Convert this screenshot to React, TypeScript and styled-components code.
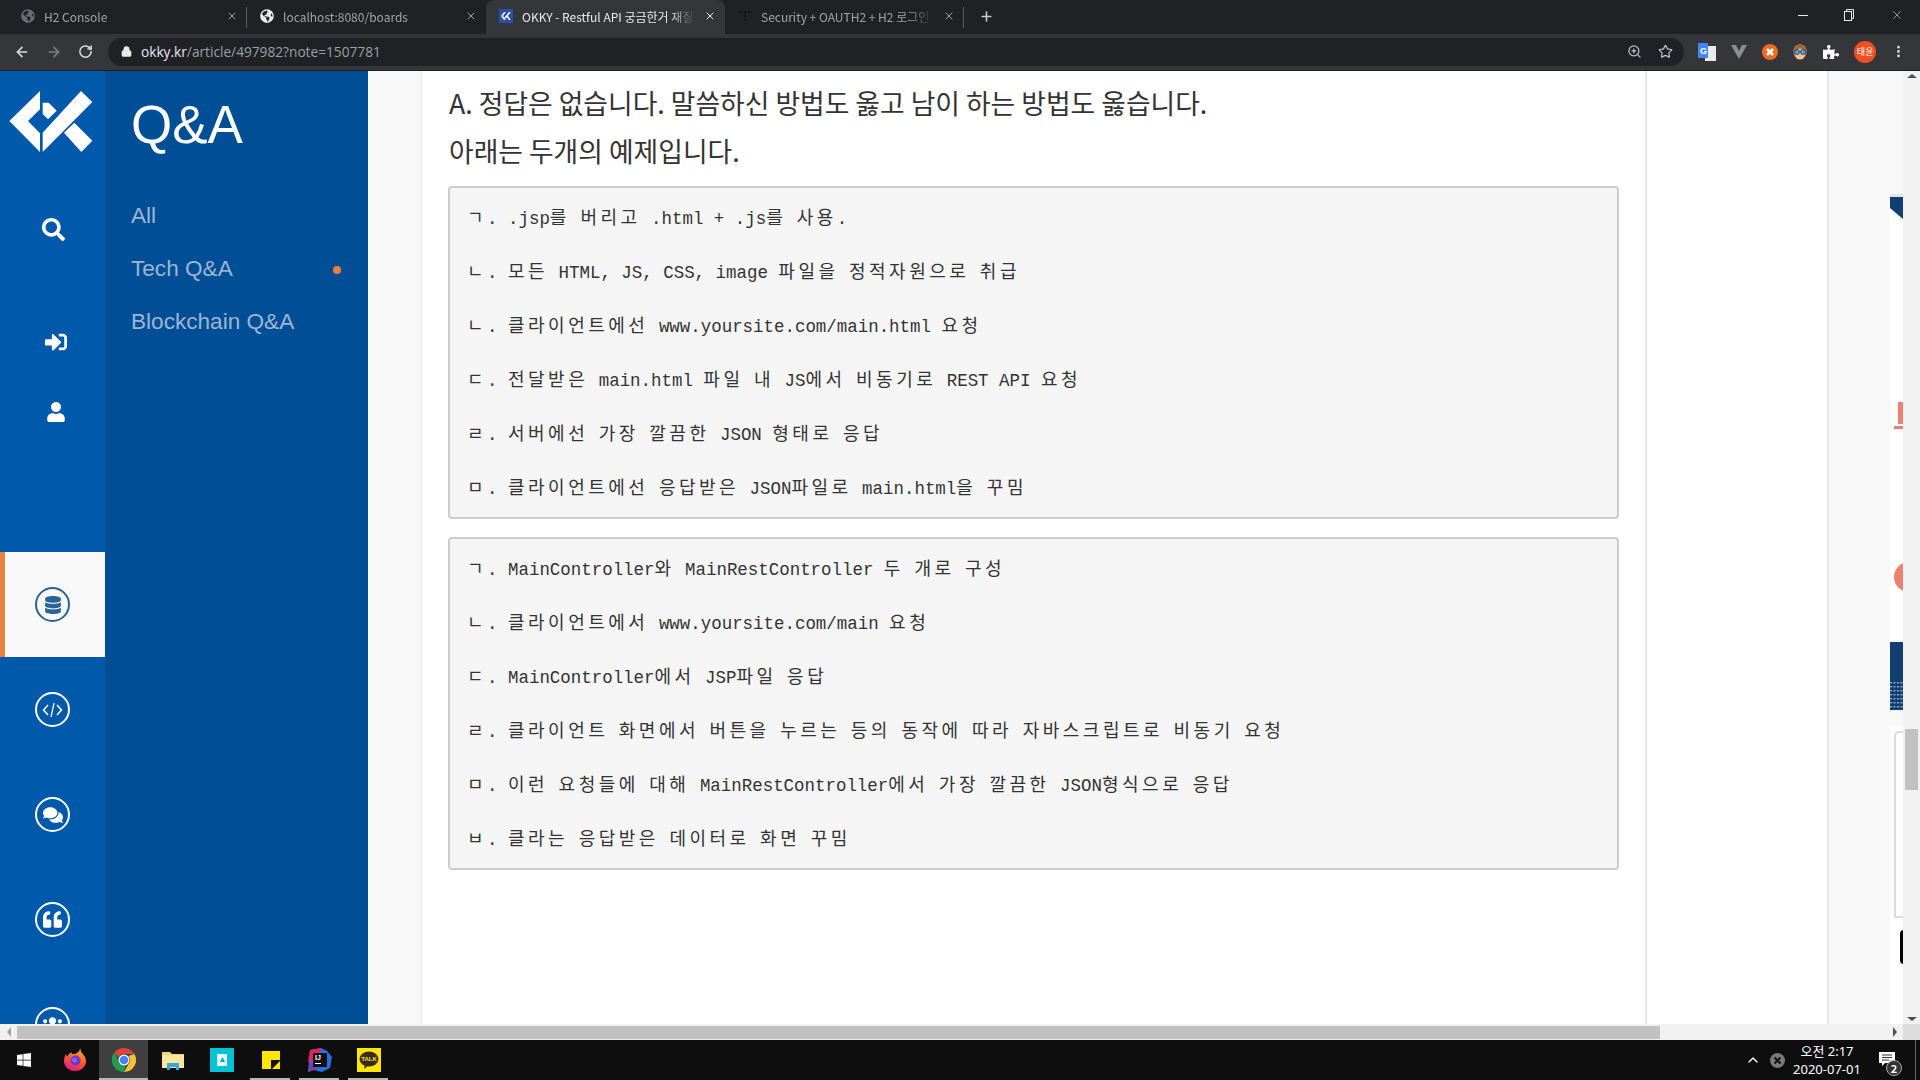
import { ReactNode } from "react";
import styled, { createGlobalStyle } from "styled-components";
import {
  FaComments,
  FaDatabase,
  FaGlobeAmericas,
  FaPuzzlePiece,
  FaQuoteLeft,
  FaSearch,
  FaSignInAlt,
  FaUser,
  FaUsers,
  FaWindows,
} from "react-icons/fa";
import {
  ArrowLeft,
  ArrowRight,
  ChevronUp,
  Lock,
  MoreVertical,
  Plus,
  RotateCw,
  Star,
  X,
  ZoomIn,
} from "lucide-react";

const GlobalStyle = createGlobalStyle`
  html, body {
    margin: 0;
    padding: 0;
    background: #fff;
    overflow: hidden;
  }
  * {
    box-sizing: border-box;
  }
`;

const Screen = styled.div`
  width: 1920px;
  height: 1080px;
  display: flex;
  flex-direction: column;
  overflow: hidden;
  font-family: "Noto Sans CJK KR", "Noto Sans", sans-serif;
`;

/* browser chrome */
const TabStrip = styled.div`
  height: 34px;
  flex: none;
  display: flex;
  align-items: stretch;
  padding-left: 8px;
  background: #202124;
`;

const Tab = styled.div<{ $active?: boolean; $sep?: boolean }>`
  width: 239px;
  flex: none;
  display: flex;
  align-items: center;
  gap: 9px;
  padding: 0 9px 2px 13px;
  position: relative;
  border-radius: 8px 8px 0 0;
  color: ${(p) => (p.$active ? "#e8eaed" : "#a0a3a7")};
  background: ${(p) => (p.$active ? "#35363a" : "transparent")};
  &::after {
    content: "";
    display: ${(p) => (p.$sep ? "block" : "none")};
    position: absolute;
    right: 0;
    top: 7px;
    bottom: 6px;
    width: 1px;
    background: #5a5c60;
  }
`;

const TabTitle = styled.div`
  flex: 1;
  min-width: 0;
  font-size: 12px;
  white-space: nowrap;
  overflow: hidden;
  -webkit-mask-image: linear-gradient(to right, #000 85%, transparent);
  mask-image: linear-gradient(to right, #000 85%, transparent);
`;

const TabFavicon = styled.div<{ $bg?: string }>`
  width: 14px;
  height: 14px;
  flex: none;
  display: flex;
  align-items: center;
  justify-content: center;
  background: ${(p) => p.$bg || "transparent"};
`;

const NewTab = styled.div`
  width: 44px;
  flex: none;
  display: flex;
  align-items: center;
  justify-content: center;
  padding-bottom: 1px;
  color: #c8cacd;
`;

const WindowControls = styled.div`
  margin-left: auto;
  display: flex;
  align-items: center;
  gap: 36px;
  padding: 0 16px 4px 0;
  color: #e8eaed;
`;

const Toolbar = styled.div`
  height: 37px;
  flex: none;
  display: flex;
  align-items: center;
  padding: 0 0 1px 14px;
  background: #35363a;
  color: #dadce0;
  border-bottom: 1px solid #1e1f22;
`;

const NavButtons = styled.div`
  display: flex;
  align-items: center;
  gap: 16px;
  width: 94px;
  flex: none;
`;

const Omnibox = styled.div`
  width: 1576px;
  height: 28px;
  flex: none;
  display: flex;
  align-items: center;
  padding: 0 11px 0 13px;
  border-radius: 14px;
  background: #202124;
`;

const UrlText = styled.div`
  flex: 1;
  margin-left: 9px;
  font-family: "Open Sans", sans-serif;
  font-size: 13.7px;
  color: #9aa0a6;
  span {
    color: #e8eaed;
  }
`;

const OmniIcons = styled.div`
  display: flex;
  align-items: center;
  gap: 16px;
  color: #bdc1c6;
`;

const Extensions = styled.div`
  display: flex;
  flex: 1;
  align-items: center;
  justify-content: space-between;
  padding: 0 14px 0 14px;
`;

const Avatar = styled.div`
  width: 22px;
  height: 22px;
  border-radius: 50%;
  display: flex;
  align-items: center;
  justify-content: center;
  font-size: 9px;
  color: #fff;
  background: #ee5021;
`;

/* page */
const Viewport = styled.div`
  flex: 1;
  min-height: 0;
  display: flex;
`;

const Page = styled.div`
  flex: 1;
  min-width: 0;
  display: flex;
  overflow: hidden;
  background: #f8f8f8;
`;

const Rail = styled.div`
  width: 105px;
  flex: none;
  display: flex;
  flex-direction: column;
  overflow: hidden;
  background: #0059ab;
  color: #fff;
`;

const LogoSlot = styled.div`
  height: 118px;
  flex: none;
  padding: 20px 0 0 9px;
`;

const RailIcon = styled.div<{ $h: number; $top?: number; $x?: number }>`
  height: ${(p) => p.$h}px;
  flex: none;
  margin-top: ${(p) => p.$top || 0}px;
  padding-left: ${(p) => p.$x || 0}px;
  display: flex;
  align-items: center;
  justify-content: center;
`;

const CategoryItem = styled.div<{ $active?: boolean }>`
  height: 105px;
  flex: none;
  display: flex;
  align-items: center;
  justify-content: center;
  background: ${(p) => (p.$active ? "#f8f8f8" : "transparent")};
  border-left: 5px solid ${(p) => (p.$active ? "#ea8040" : "transparent")};
  color: ${(p) => (p.$active ? "#2a6496" : "#fff")};
  padding-right: 5px;
`;

const CategoryCircle = styled.div`
  width: 35px;
  height: 35px;
  border-radius: 50%;
  border: 2px solid currentColor;
  display: flex;
  align-items: center;
  justify-content: center;
`;

const SubNav = styled.div`
  width: 263px;
  flex: none;
  padding: 24px 27px 0 26px;
  background: #004e96;
  font-family: "Liberation Sans", Arial, sans-serif;
`;

const SubNavTitle = styled.div`
  height: 60px;
  line-height: 60px;
  font-size: 53px;
  color: #fff;
  margin-bottom: 34px;
`;

const SubNavItem = styled.div`
  height: 53px;
  display: flex;
  align-items: center;
  justify-content: space-between;
  font-size: 22.6px;
  color: #9db5d4;
`;

const Dot = styled.span`
  width: 8px;
  height: 8px;
  border-radius: 50%;
  margin-top: 2px;
  background: #f47d3c;
`;

const Gutter = styled.div`
  width: 53px;
  flex: none;
`;

const Article = styled.div`
  width: 1226px;
  flex: none;
  padding: 8px 27px 0 26px;
  background: #fff;
  border-left: 1px solid #e6e6e6;
  border-right: 2px solid #e6e6e6;
`;

const Sentence = styled.p`
  margin: 0;
  height: 48px;
  line-height: 48px;
  padding-left: 1px;
  font-size: 26.8px;
  color: #333;
  white-space: nowrap;
`;

const Pre = styled.pre`
  margin: 0 0 18px;
  width: 1171px;
  padding: 1px 17px 4px;
  border: 2px solid #ccc;
  border-radius: 4px;
  background: #f5f5f5;
  &:first-of-type {
    margin-top: 11px;
  }
`;

const PreLine = styled.div`
  height: 54px;
  line-height: 54px;
  font-family: "Liberation Mono", monospace;
  font-size: 17.45px;
  color: #333;
  white-space: pre;
`;

const Han = styled.span`
  font-family: "Noto Sans CJK KR", sans-serif;
  font-size: 18px;
  letter-spacing: 3.5px;
`;

const WhiteSpace = styled.div`
  width: 182px;
  flex: none;
  background: #fff;
  border-right: 2px solid #e6e6e6;
`;

const AdColumn = styled.div`
  flex: 1;
  padding: 123px 0 0 61px;
  display: flex;
  flex-direction: column;
  overflow: hidden;
`;

const AdBanner = styled.svg`
  width: 13px;
  height: 448px;
  flex: none;
  display: block;
`;

const AdStrip = styled.svg`
  width: 13px;
  height: 68px;
  flex: none;
  display: block;
`;

const AdCard = styled.div`
  width: 13px;
  flex: 1;
  margin-top: 16px;
  background: #fff;
  padding: 5px 0 0 4px;
`;

const AdOutline = styled.div`
  height: 187px;
  border: 2px solid #dcdce0;
  border-right: none;
  border-radius: 5px 0 0 0;
  margin-bottom: 12px;
`;

const AdBlack = styled.div`
  width: 10px;
  height: 34px;
  margin-left: 6px;
  border-radius: 4px 0 0 4px;
  background: #000;
`;

const VScroll = styled.div`
  width: 17px;
  flex: none;
  display: flex;
  flex-direction: column;
  align-items: center;
  justify-content: space-between;
  padding: 3px 0 3px;
  background: #f1f1f1;
  position: relative;
`;

const VThumb = styled.div`
  position: absolute;
  top: 658px;
  left: 2px;
  width: 13px;
  height: 61px;
  background: #c1c1c1;
`;

const Arrow = styled.div<{ $dir: "up" | "down" | "left" | "right" }>`
  width: 0;
  height: 0;
  flex: none;
  border-style: solid;
  border-color: transparent;
  ${(p) =>
    p.$dir === "up"
      ? "border-width: 0 5px 4px; border-bottom-color: #505050;"
      : p.$dir === "down"
        ? "border-width: 4px 5px 0; border-top-color: #505050;"
        : p.$dir === "left"
          ? "border-width: 5px 4px 5px 0; border-right-color: #a3a3a3;"
          : "border-width: 5px 0 5px 4px; border-left-color: #505050;"}
`;

const HScroll = styled.div`
  height: 16px;
  flex: none;
  display: flex;
  align-items: center;
  background: #f1f1f1;
`;

const HButton = styled.div`
  width: 17px;
  height: 16px;
  flex: none;
  display: flex;
  align-items: center;
  justify-content: center;
`;

const HThumb = styled.div`
  width: 1643px;
  height: 13px;
  flex: none;
  background: #c1c1c1;
`;

const ScrollCorner = styled.div`
  width: 17px;
  height: 16px;
  flex: none;
  background: #dcdcdc;
`;

const HSpacer = styled.div`
  flex: 1;
`;

/* taskbar */
const Taskbar = styled.div`
  height: 40px;
  flex: none;
  display: flex;
  align-items: stretch;
  background: #0e0e0e;
  color: #fff;
`;

const TaskItem = styled.div<{ $on?: boolean; $open?: boolean }>`
  width: 49px;
  flex: none;
  display: flex;
  align-items: center;
  justify-content: center;
  position: relative;
  background: ${(p) => (p.$on ? "#3f3f3f" : "transparent")};
  &::after {
    content: "";
    display: ${(p) => (p.$open ? "block" : "none")};
    position: absolute;
    bottom: 0;
    left: ${(p) => (p.$on ? "0" : "4px")};
    right: ${(p) => (p.$on ? "0" : "5px")};
    height: 2px;
    background: #b8b8b8;
  }
`;

const StartButton = styled.div`
  width: 50px;
  flex: none;
  display: flex;
  align-items: center;
  justify-content: center;
  padding-right: 2px;
`;

const Tray = styled.div`
  margin-left: auto;
  display: flex;
  align-items: center;
  padding-right: 4px;
`;

const TrayIcon = styled.div`
  width: 24px;
  display: flex;
  align-items: center;
  justify-content: center;
`;

const Clock = styled.div`
  width: 76px;
  margin-right: 5px;
  text-align: center;
  font-size: 13px;
  line-height: 18px;
  color: #fff;
  font-family: "Noto Sans", "Noto Sans CJK KR", sans-serif;
`;

const Notify = styled.div`
  width: 46px;
  height: 100%;
  display: flex;
  align-items: center;
  justify-content: center;
  padding: 0 11px 2px 0;
  position: relative;
  border-right: 1px solid #666;
`;

const NotifyBadge = styled.span`
  position: absolute;
  left: 16px;
  top: 20px;
  width: 16px;
  height: 16px;
  border-radius: 50%;
  display: flex;
  align-items: center;
  justify-content: center;
  font-size: 11px;
  font-weight: 700;
  background: #333;
  border: 1px solid #aaa;
  color: #fff;
`;

const Mono = ({ text }: { text: string }) => (
  <>
    {text
      .split(/([\u3131-\uD7A3]+)/)
      .map((part, i): ReactNode => (i % 2 ? <Han key={i}>{part}</Han> : part))}
  </>
);

const boxOne = [
  "ㄱ. .jsp를 버리고 .html + .js를 사용.",
  "ㄴ. 모든 HTML, JS, CSS, image 파일을 정적자원으로 취급",
  "ㄴ. 클라이언트에선 www.yoursite.com/main.html 요청",
  "ㄷ. 전달받은 main.html 파일 내 JS에서 비동기로 REST API 요청",
  "ㄹ. 서버에선 가장 깔끔한 JSON 형태로 응답",
  "ㅁ. 클라이언트에선 응답받은 JSON파일로 main.html을 꾸밈",
];

const boxTwo = [
  "ㄱ. MainController와 MainRestController 두 개로 구성",
  "ㄴ. 클라이언트에서 www.yoursite.com/main 요청",
  "ㄷ. MainController에서 JSP파일 응답",
  "ㄹ. 클라이언트 화면에서 버튼을 누르는 등의 동작에 따라 자바스크립트로 비동기 요청",
  "ㅁ. 이런 요청들에 대해 MainRestController에서 가장 깔끔한 JSON형식으로 응답",
  "ㅂ. 클라는 응답받은 데이터로 화면 꾸밈",
];

const OkkyLogo = () => (
  <svg width="84" height="62" viewBox="30 65 250 186" fill="#fff">
    <polygon points="122,65 30,155 122,248 122,192 86,155 122,120" />
    <polygon points="130,248 130,190 245,65 279,98" />
    <polygon points="130,100 148,100 172,124 146,150 130,134" />
    <polygon points="194,190 225,160 279,214 246,248" />
  </svg>
);

const CodeGlyph = () => (
  <svg width="21" height="16" viewBox="0 0 21 16" fill="none" stroke="currentColor" strokeWidth="1.500">
    <path d="M6 3L1.500 8 6 13M15 3l4.500 5L15 13" />
    <path d="M12 1L9 15" strokeWidth="1.200" />
  </svg>
);

const Firefox = () => (
  <svg width="24" height="24" viewBox="0 0 24 24">
    <defs>
      <linearGradient id="ffx" x1="0.7" y1="0" x2="0.3" y2="1">
        <stop offset="0" stopColor="#ffb32c" />
        <stop offset="0.5" stopColor="#ff5a2b" />
        <stop offset="1" stopColor="#e31587" />
      </linearGradient>
    </defs>
    <path
      d="M17 0c1 2 .5 3.500 1.500 4.500C21 7 23 9.500 23 13c0 6-5 10-11 10S1 19 1 13c0-3 1-5.500 2-7 0 1 .5 2 1.500 2.500C5.500 6 7 4.500 9 4.500 8.500 5.500 9 6 10 6c3 0 7-2 7-6z"
      fill="url(#ffx)"
    />
    <circle cx="12.500" cy="12.500" r="5" fill="#6a3bc0" />
    <circle cx="11.500" cy="12" r="2.500" fill="#9059ff" />
  </svg>
);

const Chrome = ({ size = 24 }: { size?: number }) => (
  <svg width={size} height={size} viewBox="0 0 24 24">
    <path d="M12 0a12 12 0 0 1 10.400 6H12a6 6 0 0 0-5.600 3.800L2.500 4.500A12 12 0 0 1 12 0z" fill="#db4437" />
    <path d="M22.400 6A12 12 0 0 1 12 24l5.200-9A6 6 0 0 0 16.500 8z" fill="#fbc02d" />
    <path d="M12 24A12 12 0 0 1 2.500 4.500l4.300 9.500a6 6 0 0 0 6.500 3.900z" fill="#1f9d55" />
    <circle cx="12" cy="12" r="5.500" fill="#fff" />
    <circle cx="12" cy="12" r="4.300" fill="#4285f4" />
  </svg>
);

const Explorer = () => (
  <svg width="22" height="20" viewBox="0 0 22 20">
    <path d="M0 2h8l2 2h12v14H0z" fill="#f5d06e" />
    <rect x="0" y="5" width="22" height="13" fill="#fde69a" />
    <path d="M5 20v-7h12v7h-3v-3H8v3z" fill="#35a8e0" />
  </svg>
);

const NoteApp = () => (
  <svg width="24" height="24" viewBox="0 0 24 24">
    <rect width="24" height="24" fill="#00c4d6" />
    <rect x="7" y="6" width="10" height="12" fill="#e8fbfd" />
    <path d="M10 14l2.500-5 2.500 5z" fill="#00a6c0" />
  </svg>
);

const Sticky = () => (
  <svg width="18" height="18" viewBox="0 0 18 18">
    <rect width="18" height="18" fill="#ffe500" />
    <path d="M18 9v1l-8 8H9V9z" fill="#111" />
  </svg>
);

const Idea = () => (
  <svg width="24" height="24" viewBox="0 0 24 24">
    <path d="M2 2l11-2 6 3 5 6-2 11-8 4-8-2-6 2z" fill="#2b6ee0" />
    <path d="M0 14L2 2l11-2-3 12z" fill="#e0245e" />
    <path d="M0 24l2-10 8 6z" fill="#7b3fa0" />
    <rect x="5" y="5" width="14" height="14" fill="#111" />
    <text x="7" y="12" fontSize="7" fontWeight="700" fill="#fff" fontFamily="Liberation Sans">IJ</text>
    <rect x="7" y="15" width="6" height="1" fill="#fff" />
  </svg>
);

const KakaoTalk = () => (
  <svg width="24" height="24" viewBox="0 0 24 24">
    <rect width="24" height="24" fill="#ffe600" />
    <ellipse cx="12" cy="11" rx="9.500" ry="7.500" fill="#3a2a1a" />
    <path d="M8 16l-1 5 5-4z" fill="#3a2a1a" />
    <text x="12" y="13" textAnchor="middle" fontSize="6" fontWeight="700" fill="#ffe600" fontFamily="Liberation Sans">TALK</text>
  </svg>
);

const Translate = () => (
  <svg width="18" height="18" viewBox="0 0 18 18">
    <rect x="7" y="3" width="11" height="15" fill="#e8eaed" />
    <rect x="0" y="0" width="10" height="15" fill="#4285f4" />
    <text x="2" y="11" fontSize="9" fontWeight="700" fill="#fff" fontFamily="Liberation Sans">G</text>
  </svg>
);

const Vue = () => (
  <svg width="16" height="16" viewBox="0 0 16 16">
    <path d="M0 1h5l3 6 3-6h5L8 15z" fill="#8b8d90" />
  </svg>
);

const OrangeExt = () => (
  <svg width="16" height="16" viewBox="0 0 16 16">
    <circle cx="8" cy="8" r="8" fill="#f26a21" />
    <path d="M5 5l6 6M11 5l-6 6" stroke="#fff" strokeWidth="2.500" />
  </svg>
);

const FaceExt = () => (
  <svg width="16" height="18" viewBox="0 0 16 18">
    <circle cx="8" cy="8" r="7" fill="#9a6a3c" />
    <circle cx="8" cy="11" r="5.500" fill="#f0c090" />
    <circle cx="5" cy="9" r="2.500" fill="#4fa3e0" stroke="#234" strokeWidth="0.800" />
    <circle cx="11" cy="9" r="2.500" fill="#4fa3e0" stroke="#234" strokeWidth="0.800" />
  </svg>
);

const RestoreIcon = () => (
  <svg width="10" height="12" viewBox="0 0 10 12" fill="none" stroke="#e8eaed" strokeWidth="1">
    <rect x="0.500" y="2.500" width="7" height="9" />
    <path d="M2.500 2.500v-2h7v9h-2" />
  </svg>
);

const MinimizeIcon = () => (
  <svg width="10" height="12" viewBox="0 0 10 12">
    <rect y="6" width="10" height="1" fill="#e8eaed" />
  </svg>
);

const NotifyIcon = () => (
  <svg width="16" height="14" viewBox="0 0 16 14" fill="#fff">
    <path d="M0 0h16v11H6l-3 3v-3H0z" />
    <path d="M3 3h10M3 5.500h10M3 8h7" stroke="#333" strokeWidth="1" />
  </svg>
);

const TrayClose = () => (
  <svg width="15" height="15" viewBox="0 0 15 15">
    <circle cx="7.500" cy="7.500" r="7.500" fill="#7a7a7a" />
    <path d="M4.500 4.500l6 6M10.500 4.500l-6 6" stroke="#111" strokeWidth="2" />
  </svg>
);

const categories = [
  { icon: <FaDatabase size={18} />, active: true },
  { icon: <CodeGlyph /> },
  { icon: <FaComments size={20} /> },
  { icon: <FaQuoteLeft size={19} /> },
  { icon: <FaUsers size={21} /> },
];

const tabs = [
  { title: "H2 Console", favicon: <FaGlobeAmericas size={14} color="#6b6e72" />, sep: true },
  { title: "localhost:8080/boards", favicon: <FaGlobeAmericas size={14} color="#e8eaed" /> },
  {
    title: "OKKY - Restful API 궁금한거 재질문",
    favicon: (
      <TabFavicon $bg="#2b50a8">
        <svg width="10" height="8" viewBox="0 0 10 8" fill="none" stroke="#fff" strokeWidth="1.500">
          <path d="M4 0L1 4l3 4M9 0L4 6M6 4l3 4" />
        </svg>
      </TabFavicon>
    ),
    active: true,
  },
  {
    title: "Security + OAUTH2 + H2 로그인",
    favicon: (
      <svg width="14" height="14" viewBox="0 0 14 14" fill="#111">
        <path d="M2 2h2v2H2zM6 2h2v2H6zM10 2h2v2h-2zM6 6h2v2H6zM6 10h2v2H6z" />
      </svg>
    ),
    sep: true,
  },
];

const App = () => (
  <>
    <GlobalStyle />
    <Screen>
      <TabStrip>
        {tabs.map((tab) => (
          <Tab key={tab.title} $active={tab.active} $sep={tab.sep}>
            {tab.favicon}
            <TabTitle>{tab.title}</TabTitle>
            <X size={12} strokeWidth={2} />
          </Tab>
        ))}
        <NewTab>
          <Plus size={15} strokeWidth={2.5} />
        </NewTab>
        <WindowControls>
          <MinimizeIcon />
          <RestoreIcon />
          <X size={14} strokeWidth={1} />
        </WindowControls>
      </TabStrip>
      <Toolbar>
        <NavButtons>
          <ArrowLeft size={16} strokeWidth={2.4} />
          <ArrowRight size={16} strokeWidth={2.4} color="#7d7f83" />
          <RotateCw size={15} strokeWidth={2.4} />
        </NavButtons>
        <Omnibox>
          <Lock size={11} strokeWidth={3} color="#e8eaed" fill="#e8eaed" />
          <UrlText>
            <span>okky.kr</span>/article/497982?note=1507781
          </UrlText>
          <OmniIcons>
            <ZoomIn size={15} />
            <Star size={15} strokeWidth={2} />
          </OmniIcons>
        </Omnibox>
        <Extensions>
          <Translate />
          <Vue />
          <OrangeExt />
          <FaceExt />
          <FaPuzzlePiece size={16} color="#fff" />
          <Avatar>태윤</Avatar>
          <MoreVertical size={15} strokeWidth={2.5} />
        </Extensions>
      </Toolbar>
      <Viewport>
        <Page>
          <Rail>
            <LogoSlot>
              <OkkyLogo />
            </LogoSlot>
            <RailIcon $h={80} $x={2}>
              <FaSearch size={23} />
            </RailIcon>
            <RailIcon $h={60} $top={43} $x={7}>
              <FaSignInAlt size={22} />
            </RailIcon>
            <RailIcon $h={60} $top={10} $x={7}>
              <FaUser size={20} />
            </RailIcon>
            <RailIcon $h={110} />
            {categories.map((cat, i) => (
              <CategoryItem key={i} $active={cat.active}>
                <CategoryCircle>{cat.icon}</CategoryCircle>
              </CategoryItem>
            ))}
          </Rail>
          <SubNav>
            <SubNavTitle>Q&amp;A</SubNavTitle>
            <SubNavItem>All</SubNavItem>
            <SubNavItem>
              Tech Q&amp;A
              <Dot />
            </SubNavItem>
            <SubNavItem>Blockchain Q&amp;A</SubNavItem>
          </SubNav>
          <Gutter />
          <Article>
            <Sentence>A. 정답은 없습니다. 말씀하신 방법도 옳고 남이 하는 방법도 옳습니다.</Sentence>
            <Sentence>아래는 두개의 예제입니다.</Sentence>
            <Pre>
              {boxOne.map((line) => (
                <PreLine key={line}>
                  <Mono text={line} />
                </PreLine>
              ))}
            </Pre>
            <Pre>
              {boxTwo.map((line) => (
                <PreLine key={line}>
                  <Mono text={line} />
                </PreLine>
              ))}
            </Pre>
          </Article>
          <WhiteSpace />
          <AdColumn>
            <AdBanner viewBox="0 0 13 448">
              <rect width="13" height="448" fill="#fff" />
              <rect width="13" height="3" fill="#e4e6ee" />
              <polygon points="0,3 13,3 13,25 0,14" fill="#123f73" />
              <rect x="8" y="208" width="5" height="22" fill="#ee8070" />
              <rect x="4" y="232" width="9" height="3" fill="#ee8070" />
              <circle cx="19" cy="383" r="15" fill="#ee8070" />
            </AdBanner>
            <AdStrip viewBox="0 0 13 68">
              <defs>
                <pattern id="adDots" width="3.500" height="4" patternUnits="userSpaceOnUse">
                  <rect width="2" height="1.500" fill="#8ea4c4" />
                </pattern>
              </defs>
              <rect width="13" height="68" fill="#123f73" />
              <rect y="40" width="13" height="28" fill="url(#adDots)" />
            </AdStrip>
            <AdCard>
              <AdOutline />
              <AdBlack />
            </AdCard>
          </AdColumn>
        </Page>
        <VScroll>
          <Arrow $dir="up" />
          <VThumb />
          <Arrow $dir="down" />
        </VScroll>
      </Viewport>
      <HScroll>
        <HButton>
          <Arrow $dir="left" />
        </HButton>
        <HThumb />
        <HSpacer />
        <HButton>
          <Arrow $dir="right" />
        </HButton>
        <ScrollCorner />
      </HScroll>
      <Taskbar>
        <StartButton>
          <FaWindows size={16} />
        </StartButton>
        <TaskItem>
          <Firefox />
        </TaskItem>
        <TaskItem $on $open>
          <Chrome />
        </TaskItem>
        <TaskItem>
          <Explorer />
        </TaskItem>
        <TaskItem>
          <NoteApp />
        </TaskItem>
        <TaskItem $open>
          <Sticky />
        </TaskItem>
        <TaskItem $open>
          <Idea />
        </TaskItem>
        <TaskItem $open>
          <KakaoTalk />
        </TaskItem>
        <Tray>
          <TrayIcon>
            <ChevronUp size={16} />
          </TrayIcon>
          <TrayIcon>
            <TrayClose />
          </TrayIcon>
          <Clock>
            <div>오전 2:17</div>
            <div>2020-07-01</div>
          </Clock>
          <Notify>
            <NotifyIcon />
            <NotifyBadge>2</NotifyBadge>
          </Notify>
        </Tray>
      </Taskbar>
    </Screen>
  </>
);

export default App;
